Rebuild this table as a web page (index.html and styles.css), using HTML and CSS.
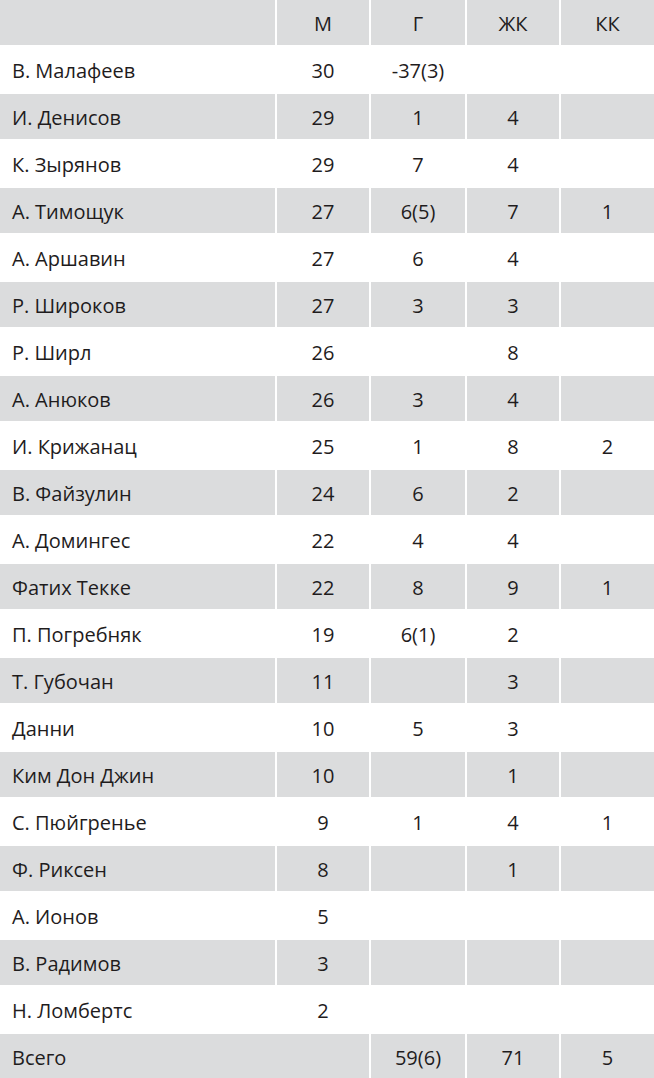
FILE: index.html
```html
<!DOCTYPE html>
<html lang="ru">
<head>
<meta charset="utf-8">
<link rel="stylesheet" href="styles.css">
</head>
<body>
<table class="stats">
  <colgroup>
    <col class="c-name"><col class="c-num"><col class="c-num2"><col class="c-num"><col class="c-num3">
  </colgroup>
  <thead>
    <tr class="grey"><th></th><th>М</th><th>Г</th><th>ЖК</th><th>КК</th></tr>
  </thead>
  <tbody>
    <tr><td class="name">В. Малафеев</td><td>30</td><td>-37(3)</td><td></td><td></td></tr>
    <tr class="grey"><td class="name">И. Денисов</td><td>29</td><td>1</td><td>4</td><td></td></tr>
    <tr><td class="name">К. Зырянов</td><td>29</td><td>7</td><td>4</td><td></td></tr>
    <tr class="grey"><td class="name">А. Тимощук</td><td>27</td><td>6(5)</td><td>7</td><td>1</td></tr>
    <tr><td class="name">А. Аршавин</td><td>27</td><td>6</td><td>4</td><td></td></tr>
    <tr class="grey"><td class="name">Р. Широков</td><td>27</td><td>3</td><td>3</td><td></td></tr>
    <tr><td class="name">Р. Ширл</td><td>26</td><td></td><td>8</td><td></td></tr>
    <tr class="grey"><td class="name">А. Анюков</td><td>26</td><td>3</td><td>4</td><td></td></tr>
    <tr><td class="name">И. Крижанац</td><td>25</td><td>1</td><td>8</td><td>2</td></tr>
    <tr class="grey"><td class="name">В. Файзулин</td><td>24</td><td>6</td><td>2</td><td></td></tr>
    <tr><td class="name">А. Домингес</td><td>22</td><td>4</td><td>4</td><td></td></tr>
    <tr class="grey"><td class="name">Фатих Текке</td><td>22</td><td>8</td><td>9</td><td>1</td></tr>
    <tr><td class="name">П. Погребняк</td><td>19</td><td>6(1)</td><td>2</td><td></td></tr>
    <tr class="grey"><td class="name">Т. Губочан</td><td>11</td><td></td><td>3</td><td></td></tr>
    <tr><td class="name">Данни</td><td>10</td><td>5</td><td>3</td><td></td></tr>
    <tr class="grey"><td class="name">Ким Дон Джин</td><td>10</td><td></td><td>1</td><td></td></tr>
    <tr><td class="name">С. Пюйгренье</td><td>9</td><td>1</td><td>4</td><td>1</td></tr>
    <tr class="grey"><td class="name">Ф. Риксен</td><td>8</td><td></td><td>1</td><td></td></tr>
    <tr><td class="name">А. Ионов</td><td>5</td><td></td><td></td><td></td></tr>
    <tr class="grey"><td class="name">В. Радимов</td><td>3</td><td></td><td></td><td></td></tr>
    <tr><td class="name">Н. Ломбертс</td><td>2</td><td></td><td></td><td></td></tr>
    <tr class="grey"><td class="name" colspan="2">Всего</td><td>59(6)</td><td>71</td><td>5</td></tr>
  </tbody>
</table>
</body>
</html>
```

FILE: styles.css
```css
html, body {
  margin: 0;
  padding: 0;
  background: #ffffff;
}

body {
  overflow: hidden;
}

.stats {
  border-collapse: separate;
  border-spacing: 2px;
  margin: -2px;
  table-layout: fixed;
  width: 658px;
  font-family: "Open Sans", "Liberation Sans", sans-serif;
  font-size: 20px;
  color: #1f1c1d;
}

.c-name { width: 275px; }
.c-num { width: 92px; }
.c-num2 { width: 94px; }
.c-num3 { width: 93px; }

.stats th,
.stats td {
  height: 45px;
  padding: 1px 0 0 0;
  box-sizing: border-box;
  text-align: center;
  vertical-align: middle;
  font-weight: normal;
  white-space: nowrap;
}

.stats td.name {
  text-align: left;
  padding-left: 12px;
}

.stats tr.grey th,
.stats tr.grey td {
  background: #dbdcdd;
}
```
